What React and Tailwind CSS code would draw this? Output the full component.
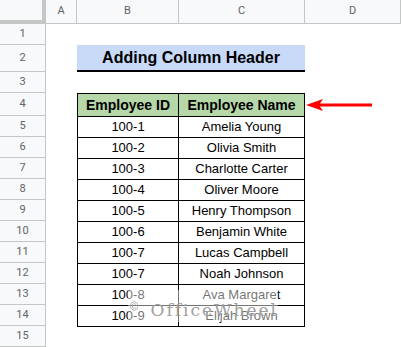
import React from 'react';

const rowHeights = [21, 27, 21, 23, 21, 21, 21, 21, 21, 21, 21, 21, 21, 21, 21];

const employees = [
  ['100-1', 'Amelia Young'],
  ['100-2', 'Olivia Smith'],
  ['100-3', 'Charlotte Carter'],
  ['100-4', 'Oliver Moore'],
  ['100-5', 'Henry Thompson'],
  ['100-6', 'Benjamin White'],
  ['100-7', 'Lucas Campbell'],
  ['100-7', 'Noah Johnson'],
  ['100-8', 'Ava Margaret'],
  ['100-9', 'Elijah Brown'],
];

const hdr = "bg-[#f8f9fa] text-[#5f6368] text-[11px] flex items-center justify-center border-[#c4c7c5]";
const cell = "flex items-center justify-center text-[13px] text-black";

function Arrow() {
  return (
    <svg width="70" height="14" viewBox="0 0 70 14">
      <polygon points="1,7 18,1 15,5.5 67,5.5 67,8.5 15,8.5 18,13" fill="#ff0000" />
    </svg>
  );
}

function Logo() {
  return (
    <svg width="22" height="28" viewBox="0 0 22 28" fill="none" stroke="#a0a0a0" strokeWidth="2">
      <path d="M11 2 L20 7.5 L20 20.5 L11 26 L2 20.5 L2 7.5 Z" />
      <path d="M6.5 10 L11 7.5 L15.5 10 M6.5 10 L6.5 18 L11 20.5 L15.5 18" />
    </svg>
  );
}

export default function App() {
  return (
    <div className="relative w-[401px] h-[347px] overflow-hidden bg-white font-['Liberation_Sans',Arial,sans-serif]">
      <div className="grid grid-cols-[46px_31px_102px_126px_96px]">
        <div className="bg-[#f8f9fa] h-[24px] border-r-4 border-b-4 border-[#c4c7c5]" />
        {['A', 'B', 'C', 'D'].map((c) => (
          <div key={c} className={`${hdr} h-[24px] border-r border-b font-['Roboto',sans-serif]`}>{c}</div>
        ))}

        {rowHeights.map((h, i) => {
          const n = i + 1;
          const emp = n >= 5 && n <= 14 ? employees[n - 5] : null;
          return (
            <React.Fragment key={n}>
              <div
                className={`${hdr} border-r border-b font-['Roboto',sans-serif] ${n === 10 ? 'bg-[#e8eaed]' : ''}`}
                style={{ height: h }}
              >
                {n}
              </div>
              <div />
              {n === 2 ? (
                <div className="col-span-2 bg-[#c9daf8] border-b-2 border-black flex items-center justify-center text-[16px] font-bold text-black pt-[1px]">
                  Adding Column Header
                </div>
              ) : n === 4 ? (
                <>
                  <div className={`${cell} bg-[#b6d7a8] border-l border-t border-r border-black font-bold text-[14px]`}>Employee ID</div>
                  <div className={`${cell} bg-[#b6d7a8] border-t border-r border-black font-bold text-[14px]`}>Employee Name</div>
                </>
              ) : emp ? (
                <>
                  <div className={`${cell} border-l border-t border-r border-black`}>{emp[0]}</div>
                  <div className={`${cell} border-t border-r border-black`}>{emp[1]}</div>
                </>
              ) : n === 15 ? (
                <>
                  <div className="border-t border-black" />
                  <div className="border-t border-black" />
                </>
              ) : (
                <>
                  <div />
                  <div />
                </>
              )}
              <div className="flex items-center">{n === 4 && <Arrow />}</div>
            </React.Fragment>
          );
        })}
      </div>

      <div className="absolute left-[128px] top-[290px] w-[150px] h-[32px] bg-white/45 flex items-center gap-[12px] pl-[2px]">
        <Logo />
        <span className="text-[17px] leading-none tracking-[2px] text-[#a0a0a0] font-['DejaVu_Serif',serif] mt-[8px]">OfficeWheel</span>
      </div>
    </div>
  );
}
